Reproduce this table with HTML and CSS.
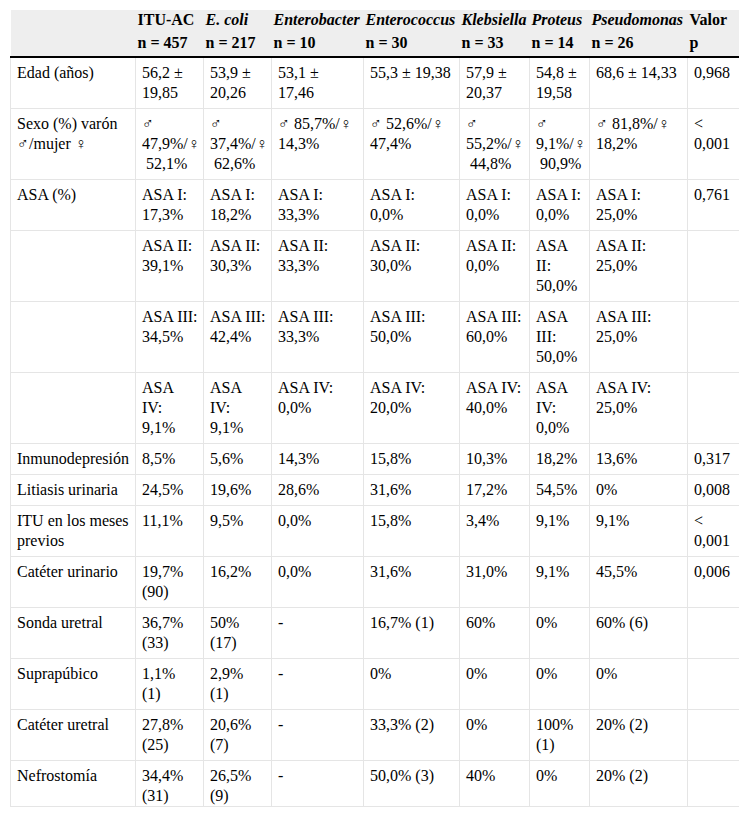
FILE: index.html
```html
<!DOCTYPE html>
<html lang="es">
<head>
<meta charset="utf-8">
<title>Tabla</title>
<link rel="stylesheet" href="styles.css">
</head>
<body>
<table class="data">
  <colgroup>
    <col class="c-label">
    <col class="c-68">
    <col class="c-68">
    <col class="c-92">
    <col class="c-96">
    <col class="c-70">
    <col class="c-60">
    <col class="c-98">
    <col class="c-p">
  </colgroup>
  <thead>
    <tr>
      <th></th>
      <th><span class="hl">ITU-AC</span><span class="hn">n = 457</span></th>
      <th><span class="hl"><i>E. coli</i></span><span class="hn">n = 217</span></th>
      <th><span class="hl"><i>Enterobacter</i></span><span class="hn">n = 10</span></th>
      <th><span class="hl"><i>Enterococcus</i></span><span class="hn">n = 30</span></th>
      <th><span class="hl"><i>Klebsiella</i></span><span class="hn">n = 33</span></th>
      <th><span class="hl"><i>Proteus</i></span><span class="hn">n = 14</span></th>
      <th><span class="hl"><i>Pseudomonas</i></span><span class="hn">n = 26</span></th>
      <th><span class="hl">Valor</span><span class="hn">p</span></th>
    </tr>
  </thead>
  <tbody>
    <tr>
      <td>Edad (años)</td>
      <td>56,2 ±<br>19,85</td>
      <td>53,9 ±<br>20,26</td>
      <td>53,1 ±<br>17,46</td>
      <td>55,3 ± 19,38</td>
      <td>57,9 ±<br>20,37</td>
      <td>54,8 ±<br>19,58</td>
      <td>68,6 ± 14,33</td>
      <td>0,968</td>
    </tr>
    <tr>
      <td>Sexo (%) varón<br>♂/mujer ♀</td>
      <td>♂<br>47,9%/♀<br>&nbsp;52,1%</td>
      <td>♂<br>37,4%/♀<br>&nbsp;62,6%</td>
      <td>♂ 85,7%/♀<br>14,3%</td>
      <td>♂ 52,6%/♀<br>47,4%</td>
      <td>♂<br>55,2%/♀<br>&nbsp;44,8%</td>
      <td>♂<br>9,1%/♀<br>&nbsp;90,9%</td>
      <td>♂ 81,8%/♀<br>18,2%</td>
      <td>&lt;<br>0,001</td>
    </tr>
    <tr>
      <td>ASA (%)</td>
      <td>ASA I:<br>17,3%</td>
      <td>ASA I:<br>18,2%</td>
      <td>ASA I:<br>33,3%</td>
      <td>ASA I:<br>0,0%</td>
      <td>ASA I:<br>0,0%</td>
      <td>ASA I:<br>0,0%</td>
      <td>ASA I:<br>25,0%</td>
      <td>0,761</td>
    </tr>
    <tr>
      <td></td>
      <td>ASA II:<br>39,1%</td>
      <td>ASA II:<br>30,3%</td>
      <td>ASA II:<br>33,3%</td>
      <td>ASA II:<br>30,0%</td>
      <td>ASA II:<br>0,0%</td>
      <td>ASA<br>II:<br>50,0%</td>
      <td>ASA II:<br>25,0%</td>
      <td></td>
    </tr>
    <tr>
      <td></td>
      <td>ASA III:<br>34,5%</td>
      <td>ASA III:<br>42,4%</td>
      <td>ASA III:<br>33,3%</td>
      <td>ASA III:<br>50,0%</td>
      <td>ASA III:<br>60,0%</td>
      <td>ASA<br>III:<br>50,0%</td>
      <td>ASA III:<br>25,0%</td>
      <td></td>
    </tr>
    <tr>
      <td></td>
      <td>ASA<br>IV:<br>9,1%</td>
      <td>ASA<br>IV:<br>9,1%</td>
      <td>ASA IV:<br>0,0%</td>
      <td>ASA IV:<br>20,0%</td>
      <td>ASA IV:<br>40,0%</td>
      <td>ASA<br>IV:<br>0,0%</td>
      <td>ASA IV:<br>25,0%</td>
      <td></td>
    </tr>
    <tr>
      <td>Inmunodepresión</td>
      <td>8,5%</td>
      <td>5,6%</td>
      <td>14,3%</td>
      <td>15,8%</td>
      <td>10,3%</td>
      <td>18,2%</td>
      <td>13,6%</td>
      <td>0,317</td>
    </tr>
    <tr>
      <td>Litiasis urinaria</td>
      <td>24,5%</td>
      <td>19,6%</td>
      <td>28,6%</td>
      <td>31,6%</td>
      <td>17,2%</td>
      <td>54,5%</td>
      <td>0%</td>
      <td>0,008</td>
    </tr>
    <tr>
      <td>ITU en los meses<br>previos</td>
      <td>11,1%</td>
      <td>9,5%</td>
      <td>0,0%</td>
      <td>15,8%</td>
      <td>3,4%</td>
      <td>9,1%</td>
      <td>9,1%</td>
      <td>&lt;<br>0,001</td>
    </tr>
    <tr>
      <td>Catéter urinario</td>
      <td>19,7%<br>(90)</td>
      <td>16,2%</td>
      <td>0,0%</td>
      <td>31,6%</td>
      <td>31,0%</td>
      <td>9,1%</td>
      <td>45,5%</td>
      <td>0,006</td>
    </tr>
    <tr>
      <td>Sonda uretral</td>
      <td>36,7%<br>(33)</td>
      <td>50%<br>(17)</td>
      <td>-</td>
      <td>16,7% (1)</td>
      <td>60%</td>
      <td>0%</td>
      <td>60% (6)</td>
      <td></td>
    </tr>
    <tr>
      <td>Suprapúbico</td>
      <td>1,1%<br>(1)</td>
      <td>2,9%<br>(1)</td>
      <td>-</td>
      <td>0%</td>
      <td>0%</td>
      <td>0%</td>
      <td>0%</td>
      <td></td>
    </tr>
    <tr>
      <td>Catéter uretral</td>
      <td>27,8%<br>(25)</td>
      <td>20,6%<br>(7)</td>
      <td>-</td>
      <td>33,3% (2)</td>
      <td>0%</td>
      <td>100%<br>(1)</td>
      <td>20% (2)</td>
      <td></td>
    </tr>
    <tr>
      <td>Nefrostomía</td>
      <td>34,4%<br>(31)</td>
      <td>26,5%<br>(9)</td>
      <td>-</td>
      <td>50,0% (3)</td>
      <td>40%</td>
      <td>0%</td>
      <td>20% (2)</td>
      <td></td>
    </tr>
  </tbody>
</table>
</body>
</html>
```

FILE: styles.css
```css
body {
  margin: 10px;
  background: #ffffff;
  color: #000000;
  font-family: "Liberation Serif", "Times New Roman", serif;
  font-size: 16px;
}

.data {
  border-collapse: collapse;
  table-layout: fixed;
  width: 729px;
  line-height: 20px;
}

.c-label { width: 125px; }
.c-68 { width: 68px; }
.c-92 { width: 92px; }
.c-96 { width: 96px; }
.c-70 { width: 70px; }
.c-60 { width: 60px; }
.c-98 { width: 98px; }
.c-p { width: 52px; }

.data th {
  background: #eeeeee;
  text-align: left;
  vertical-align: top;
  font-weight: bold;
  padding: 0 1px 3px 2px;
  border-bottom: 2px solid #000000;
  white-space: nowrap;
}

.data th i {
  font-style: italic;
}

.hl,
.hn {
  display: block;
}

.hn {
  margin-top: 3px;
}

.data td {
  vertical-align: top;
  padding: 5px 4px 5px 6px;
  border: 1px solid #e5e5e5;
  white-space: nowrap;
}

.data tbody tr:last-child td {
  padding-bottom: 0;
}
```
